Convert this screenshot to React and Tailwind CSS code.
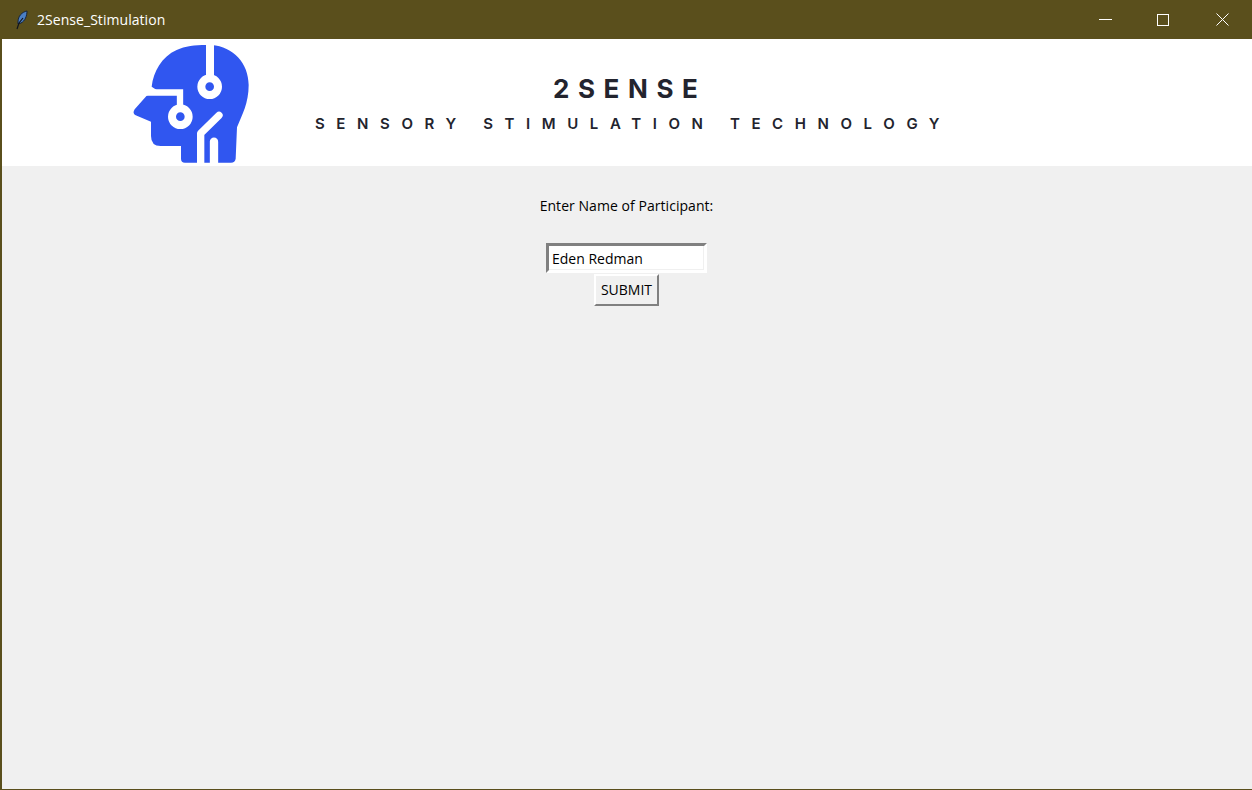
import React from 'react';

const HeadLogo = () => (
    <svg width="140" height="130" viewBox="0 0 420 390" className="shrink-0">
        <path
            d="M95 140 C100 95 125 50 170 30 C195 18 225 15 258 15 L275 15 C340 20 386 70 386 135 C386 190 366 225 351 262 L347 356 Q345 368 333 368 L195 368 Q183 368 183 356 L183 318 L122 318 Q93 318 93 288 L93 245 L47 226 Q36 220 44 208 L80 167 L110 150 Z"
            fill="#3056f0"
        />
        <g fill="none" stroke="#fff" strokeWidth="19">
            <path d="M70 157.5 L180 157.5 L180 215" />
            <path d="M270 0 L270 110" strokeWidth="24" />
            <path d="M297 226 L242 280 L242 380" strokeWidth="22" strokeLinecap="round" strokeLinejoin="round" />
            <path d="M282 380 L282 305" strokeWidth="25" strokeLinecap="round" />
        </g>
        <circle cx="269" cy="140" r="25" fill="#3056f0" stroke="#fff" strokeWidth="24" />
        <circle cx="181" cy="230" r="25" fill="#3056f0" stroke="#fff" strokeWidth="24" />
    </svg>
);

const Feather = () => (
    <svg width="14" height="20" viewBox="0 0 14 20">
        <path d="M12 1 C7 2 3 6 3 12 L3 14 L6 13 C10 11 12 6 12 1 Z" fill="#4a7fc4" stroke="#16243c" strokeWidth="1" />
        <path d="M2 19 L4 13 L8 8" fill="none" stroke="#10131c" strokeWidth="1.2" />
    </svg>
);

export default function App() {
    return (
        <div className="w-[1252px] h-[790px] flex flex-col bg-[#5a4f1c] overflow-hidden" style={{ fontFamily: '"Open Sans", sans-serif' }}>
            {/* title bar */}
            <div className="h-[39px] flex items-center shrink-0 text-white">
                <div className="pl-[15px] w-[37px]"><Feather /></div>
                <span className="text-[14px] leading-none tracking-[0.05px]">2Sense_Stimulation</span>
                <div className="ml-auto flex items-center">
                    <div className="w-[58px] h-[39px] flex items-center justify-center">
                        <div className="w-[13px] h-px bg-white" />
                    </div>
                    <div className="w-[58px] h-[39px] flex items-center justify-center">
                        <div className="w-3 h-3 border border-white" />
                    </div>
                    <div className="w-[60px] h-[39px] flex items-center justify-center">
                        <svg width="13" height="13" viewBox="0 0 13 13" stroke="#fff" strokeWidth="1">
                            <path d="M0.5 0.5 L12.5 12.5 M12.5 0.5 L0.5 12.5" />
                        </svg>
                    </div>
                </div>
            </div>

            <div className="flex-1 ml-[2px] mb-px flex flex-col bg-[#f0f0f0]">
                {/* banner */}
                <div className="h-[127px] bg-white flex items-start shrink-0 overflow-hidden">
                    <div className="ml-[118px] mt-px"><HeadLogo /></div>
                    <div className="ml-[55px] flex flex-col items-start text-[#23242e] font-bold" style={{ fontFamily: 'Inter, sans-serif' }}>
                        <div className="ml-[238px] mt-[35px] text-[26px] leading-[30px] tracking-[8.6px]">2SENSE</div>
                        <div className="mt-[11px] text-[15px] leading-[18px] tracking-[11.6px] font-semibold whitespace-nowrap">SENSORY STIMULATION TECHNOLOGY</div>
                    </div>
                </div>

                {/* form */}
                <div className="flex flex-col items-center pr-px text-[14px] text-black">
                    <div className="mt-[30px] leading-[20px] tracking-[0.05px]">Enter Name of Participant:</div>
                    <div className="mt-[27px] w-[161px] h-[30px] bg-white border-[3px] border-t-[#808080] border-l-[#808080] border-b-white border-r-white">
                        <div className="h-full border-r border-b border-[#f0f0f0] bg-white pl-[3px] pr-[2px] leading-[25px]">Eden Redman</div>
                    </div>
                    <button className="mt-px w-[65px] h-[32px] bg-[#f0f0f0] border-2 border-t-white border-l-white border-b-[#808080] border-r-[#808080] leading-none">SUBMIT</button>
                </div>
            </div>
        </div>
    );
}
